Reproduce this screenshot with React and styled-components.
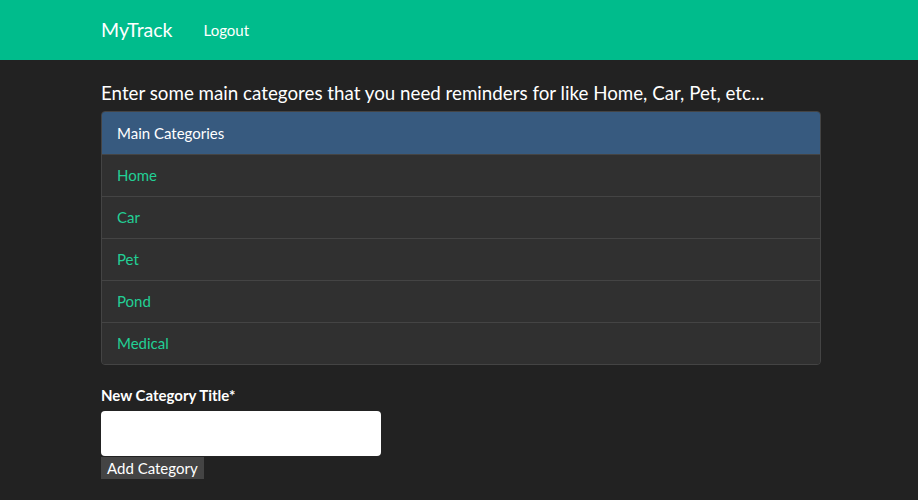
import React from "react";
import styled, { createGlobalStyle } from "styled-components";

const Global = createGlobalStyle`
  html, body { margin: 0; padding: 0; background: #222222; }
  body {
    font-family: Lato, "Open Sans", "Liberation Sans", sans-serif;
    font-size: 15px;
    line-height: 1.5;
    color: #ffffff;
  }
  * { box-sizing: border-box; }
`;

const Navbar = styled.nav`
  height: 60px;
  background: #00bc8c;
  display: flex;
  align-items: center;
  padding-left: 101px;
`;

const Brand = styled.a`
  font-size: 19.5px;
  color: #ffffff;
  text-decoration: none;
  margin-right: 31px;
  line-height: 30px;
`;

const NavLink = styled.a`
  font-size: 15px;
  color: #ffffff;
  text-decoration: none;
`;

const Main = styled.main`
  width: 720px;
  margin-left: 101px;
  padding-top: 19px;
`;

const Heading = styled.h5`
  margin: 0 0 4px;
  font-size: 18.75px;
  font-weight: 400;
  line-height: 28px;
`;

const ListGroup = styled.ul`
  list-style: none;
  margin: 0;
  padding: 0;
  border: 1px solid #444444;
  border-radius: 4px;
  overflow: hidden;
  background: #303030;
`;

const ListItem = styled.li`
  height: 42px;
  padding: 0 15px;
  display: flex;
  align-items: center;
  border-top: ${(p) => (p.$first ? "none" : "1px solid #444444")};
  background: ${(p) => (p.$active ? "#375a7f" : "#303030")};
  color: #ffffff;
  font-size: 15px;
`;

const ItemLink = styled.a`
  color: #22cf95;
  text-decoration: none;
`;

const Form = styled.form`
  margin-top: 19px;
  display: flex;
  flex-direction: column;
  align-items: flex-start;
`;

const Label = styled.label`
  font-weight: 700;
  font-size: 15px;
  line-height: 22px;
  margin-bottom: 5px;
`;

const Input = styled.input`
  width: 280px;
  height: 45px;
  border: none;
  border-radius: 4px;
  background: #ffffff;
  padding: 6px 12px;
  font-family: inherit;
  font-size: 15px;
  outline: none;
`;

const Button = styled.button`
  margin-top: 1px;
  background: #444444;
  color: #ffffff;
  border: none;
  padding: 0 6px;
  height: 22px;
  font-family: inherit;
  font-size: 15px;
  line-height: 22px;
`;

const categories = ["Home", "Car", "Pet", "Pond", "Medical"];

export default function App() {
  return (
    <>
      <Global />
      <Navbar>
        <Brand href="#">MyTrack</Brand>
        <NavLink href="#">Logout</NavLink>
      </Navbar>
      <Main>
        <Heading>
          Enter some main categores that you need reminders for like Home, Car, Pet, etc...
        </Heading>
        <ListGroup>
          <ListItem $first $active>Main Categories</ListItem>
          {categories.map((c) => (
            <ListItem key={c}>
              <ItemLink href="#">{c}</ItemLink>
            </ListItem>
          ))}
        </ListGroup>
        <Form onSubmit={(e) => e.preventDefault()}>
          <Label>New Category Title*</Label>
          <Input type="text" />
          <Button type="submit">Add Category</Button>
        </Form>
      </Main>
    </>
  );
}
